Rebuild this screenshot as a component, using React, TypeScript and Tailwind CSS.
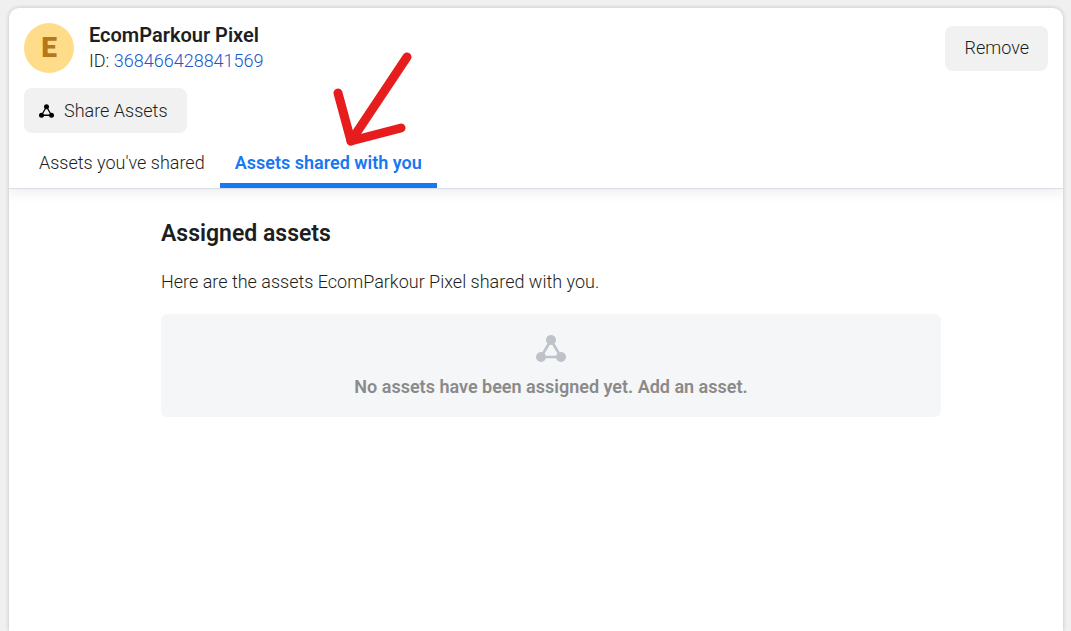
import React, { useState } from "react";
import clsx from "clsx";

const tabs = [
  { id: "yours", name: "Assets you've shared" },
  { id: "theirs", name: "Assets shared with you" },
];

const AssetsIcon = ({ className }: { className: string }) => (
  <svg viewBox="0 0 30 27" className={className} fill="currentColor" aria-hidden="true">
    <path d="M15 5 L5 22 H25 Z" fill="none" stroke="currentColor" strokeWidth="2.6" />
    <circle cx="15" cy="5" r="5" />
    <circle cx="5" cy="22" r="5" />
    <circle cx="25" cy="22" r="5" />
  </svg>
);

const Arrow = () => (
  <svg
    className="absolute left-[324px] top-[44px] w-[80px] h-[100px] pointer-events-none"
    viewBox="0 0 80 100"
    fill="none"
    stroke="#e71d1d"
    strokeWidth="9"
    strokeLinecap="round"
    strokeLinejoin="round"
    aria-hidden="true"
  >
    <path d="M74 5 L18 89" />
    <path d="M5 41 L18 89 L68 76" />
  </svg>
);

const Header = () => {
  const [active, setActive] = useState("theirs");

  return (
    <header className="relative px-[15px] pt-[15px] border-b border-[#dadde3] shadow-[0_2px_14px_rgba(0,0,0,0.09)]">
      <div className="flex items-center justify-between">
        <div className="flex items-center gap-[15px]">
          <div className="flex items-center justify-center size-[50px] rounded-full bg-[#ffdc89] text-[#b4771b] text-[28px] font-black">
            E
          </div>
          <div>
            <h1 className="text-xl leading-[25px] font-semibold">EcomParkour Pixel</h1>
            <p className="leading-[25px]">
              ID:{" "}
              <a href="#" className="text-[#1a56cc]">368466428841569</a>
            </p>
          </div>
        </div>
        <button type="button" className="h-[45px] px-[19px] rounded-lg bg-[#f1f1f1]">Remove</button>
      </div>
      <button type="button" className="flex items-center gap-[10px] h-[45px] mt-[15px] pl-[15px] pr-[19px] rounded-lg bg-[#f1f1f1]">
        <AssetsIcon className="w-[15px] h-[14px] text-black" />
        Share Assets
      </button>
      <div role="tablist" className="flex">
        {tabs.map((tab) => (
          <button
            key={tab.id}
            type="button"
            role="tab"
            aria-selected={active === tab.id}
            onClick={() => setActive(tab.id)}
            className={clsx(
              "h-[55px] px-[15px] pt-[10px] border-b-5",
              active === tab.id
                ? "border-[#1877f2] text-[#1877f2] font-semibold"
                : "border-transparent"
            )}
          >
            {tab.name}
          </button>
        ))}
      </div>
      <Arrow />
    </header>
  );
};

const App = () => {
  return (
    <div className="min-h-screen flex bg-[#f0f0f0] pt-2 pl-[9px] pr-2 font-['Roboto',sans-serif] text-lg font-[350] text-[#1c1e21]">
      <div className="flex-1 overflow-hidden rounded-t-[10px] bg-white shadow-[0_0_4px_rgba(0,0,0,0.2)]">
        <Header />
        <main className="pl-[30px]">
          <div className="max-w-[780px] mx-auto pt-[30px]">
            <h2 className="text-[23px] leading-[30px] font-semibold">Assigned assets</h2>
            <p className="mt-5 leading-[25px]">
              Here are the assets EcomParkour Pixel shared with you.
            </p>
            <div className="flex flex-col items-center gap-3 mt-5 pt-[21px] pb-[18px] rounded-md bg-[#f5f6f7]">
              <AssetsIcon className="w-[30px] h-[27px] text-[#bec3c9]" />
              <p className="leading-[25px] font-semibold text-[#8a8a8a]">
                No assets have been assigned yet. Add an asset.
              </p>
            </div>
          </div>
        </main>
      </div>
    </div>
  );
};

export default App;
